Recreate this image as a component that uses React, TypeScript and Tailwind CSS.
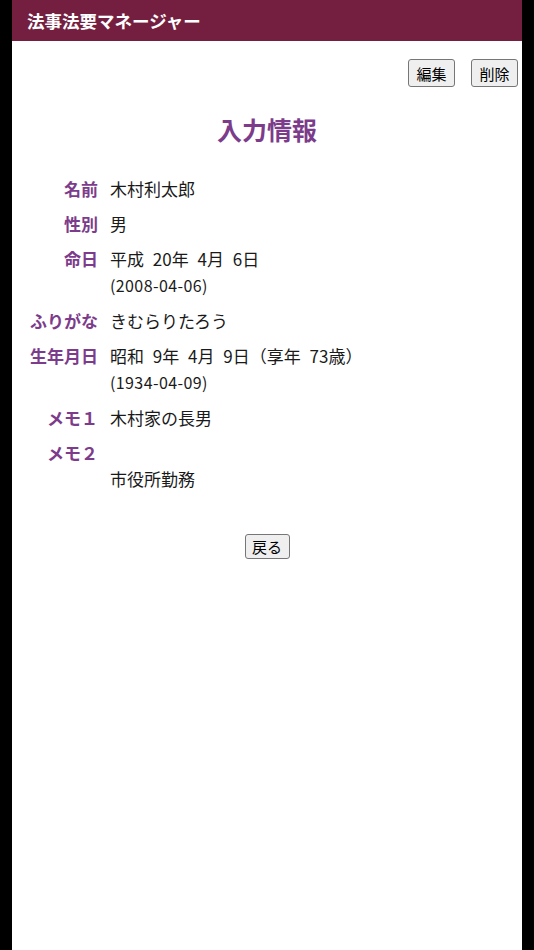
import React from "react";

type Row = {
    label: string;
    value: string;
    sub?: string;
};

const rows: Row[] = [
    { label: "名前", value: "木村利太郎" },
    { label: "性別", value: "男" },
    { label: "命日", value: "平成 20年 4月 6日", sub: "(2008-04-06)" },
    { label: "ふりがな", value: "きむらりたろう" },
    { label: "生年月日", value: "昭和 9年 4月 9日（享年 73歳）", sub: "(1934-04-09)" },
    { label: "メモ１", value: "木村家の長男" },
    { label: "メモ２", value: "", sub: "市役所勤務" },
];

const font = { fontFamily: '"Noto Sans CJK JP", "Noto Sans", sans-serif' };

function Btn({ children, className = "" }: { children: React.ReactNode; className?: string }) {
    return (
        <button
            className={
                "flex items-center justify-center bg-[#efefef] border border-[#767676] rounded-[3px] text-[15px] text-black leading-none " +
                className
            }
        >
            {children}
        </button>
    );
}

export default function App() {
    return (
        <div className="min-h-screen bg-black" style={font}>
            <div className="mx-[12px] min-h-[950px] bg-white">
                <header className="h-[41px] bg-[#751f40] flex items-center pl-[15px]">
                    <span className="text-white font-bold text-[17.5px] leading-none">
                        法事法要マネージャー
                    </span>
                </header>

                <div className="flex justify-end gap-[16px] pr-[4px] pt-[18px]">
                    <Btn className="w-[47px] h-[28px]">編集</Btn>
                    <Btn className="w-[47px] h-[28px]">削除</Btn>
                </div>

                <h1 className="mt-[27px] text-center text-[25px] leading-[30px] font-bold text-[#7c3c8b]">
                    入力情報
                </h1>

                <div className="mt-[27px] grid grid-cols-[98px_1fr]">
                    {rows.map((r) => (
                        <React.Fragment key={r.label}>
                            <div className="py-[4px] pr-[12px] text-right text-[17px] leading-[27px] font-bold text-[#7c3c8b] whitespace-nowrap">
                                {r.label}
                            </div>
                            <div className="py-[4px] text-[17px] leading-[27px] text-[#1a1a1a] [word-spacing:5px]">
                                <div className="min-h-[27px]">{r.value}</div>
                                {r.sub && (
                                    <div
                                        className={
                                            r.label === "メモ２"
                                                ? "text-[17px] leading-[26px]"
                                                : "text-[16px] leading-[27px] tracking-[0.4px]"
                                        }
                                    >
                                        {r.sub}
                                    </div>
                                )}
                            </div>
                        </React.Fragment>
                    ))}
                </div>

                <div className="mt-[38px] flex justify-center">
                    <Btn className="w-[45px] h-[25px]">戻る</Btn>
                </div>
            </div>
        </div>
    );
}
